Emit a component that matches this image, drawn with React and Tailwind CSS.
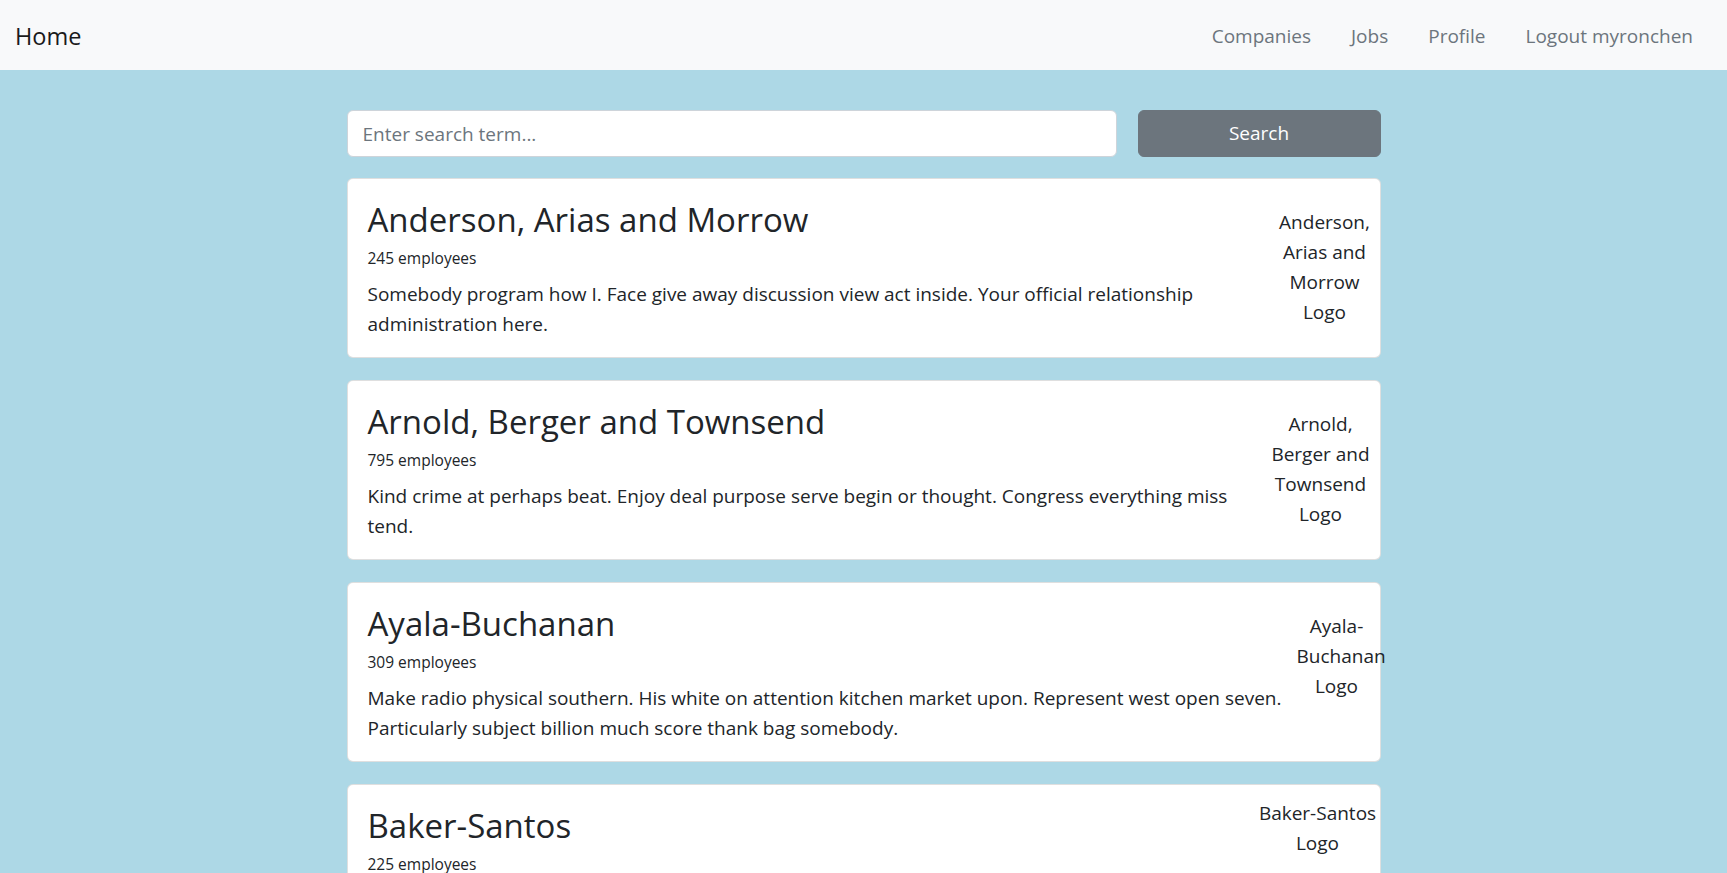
import { useState } from 'react';

const COMPANIES = [
  {
    name: 'Anderson, Arias and Morrow',
    employees: 245,
    description:
      'Somebody program how I. Face give away discussion view act inside. Your official relationship administration here.',
    logo: 'w-[92px] mr-[9px] ml-[20px] mt-[8px]',
  },
  {
    name: 'Arnold, Berger and Townsend',
    employees: 795,
    description:
      'Kind crime at perhaps beat. Enjoy deal purpose serve begin or thought. Congress everything miss tend.',
    logo: 'w-[104px] mr-[7px] ml-[20px] mt-[8px]',
  },
  {
    name: 'Ayala-Buchanan',
    employees: 309,
    description:
      'Make radio physical southern. His white on attention kitchen market upon. Represent west open seven. Particularly subject billion much score thank bag somebody.',
    logo: 'w-[80px] mr-[3px] ml-[10px] mt-[8px]',
  },
  {
    name: 'Baker-Santos',
    employees: 225,
    description:
      'Hotel deal moment bring. Every sell nothing middle discuss about. Board sense feel reality clearly.',
    logo: 'w-[118px] mr-[3px] ml-[20px] -mt-[7px]',
  },
];

function CompanyCard({ c }) {
  return (
    <div className="flex items-start bg-white border border-black/[.125] rounded-[6px] pl-[20px] pt-[20px] pb-[18px] mb-[22px]">
      <div className="flex-1 min-w-0">
        <h2 className="text-[33px] leading-[42px] text-[#212529]">{c.name}</h2>
        <p className="text-[15.5px] leading-[24px] mt-[5px] text-[#212529]">{c.employees} employees</p>
        <p className="text-[19px] leading-[30px] mt-[9px] text-[#212529]">{c.description}</p>
      </div>
      {/* logo alt text */}
      <div className={`${c.logo} shrink-0 text-center text-[19px] leading-[30px] text-[#212529]`}>
        {c.name} Logo
      </div>
    </div>
  );
}

export default function App() {
  const [term, setTerm] = useState('');

  return (
    <div className="min-h-screen bg-[#add8e6] font-['Open_Sans',sans-serif]">
      <nav className="h-[70px] bg-[#f8f9fa] flex items-center justify-between pt-[3px] pl-[15px] pr-[34px]">
        <a href="#" className="text-[23.5px] text-[#1a1a1a]">Home</a>
        <div className="flex gap-[40px] text-[19px] text-[#6c757d]">
          <a href="#">Companies</a>
          <a href="#">Jobs</a>
          <a href="#">Profile</a>
          <a href="#">Logout myronchen</a>
        </div>
      </nav>

      <main className="w-[1034px] mx-auto pt-[40px]">
        <form className="flex gap-[21px] mb-[21px]" onSubmit={(e) => e.preventDefault()}>
          <input
            value={term}
            onChange={(e) => setTerm(e.target.value)}
            placeholder="Enter search term..."
            className="flex-1 h-[47px] bg-white border border-[#ced4da] rounded-[6px] px-[15px] text-[19px] text-[#212529] placeholder:text-[#6c757d] outline-none"
          />
          <button className="w-[243px] h-[47px] bg-[#6c757d] border border-[#6c757d] rounded-[6px] text-white text-[19px]">
            Search
          </button>
        </form>

        {COMPANIES.map((c) => (
          <CompanyCard key={c.name} c={c} />
        ))}
      </main>
    </div>
  );
}
